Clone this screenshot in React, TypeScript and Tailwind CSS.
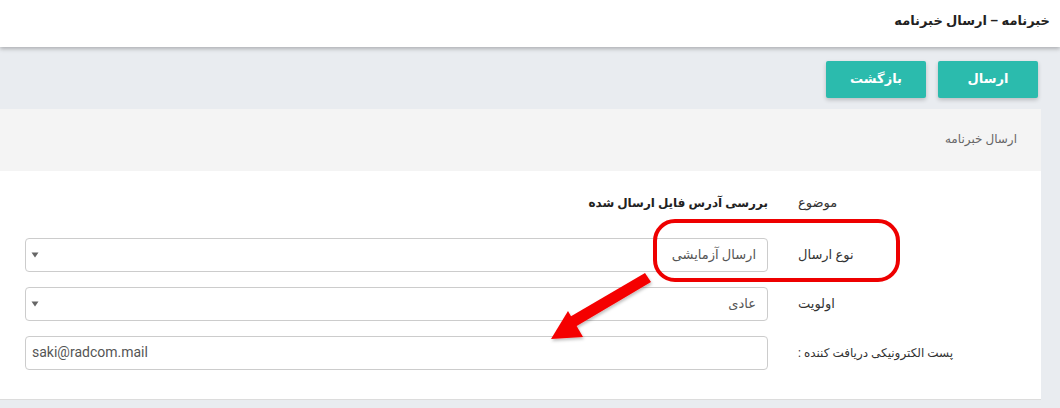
import React from "react";

const fa = { fontFamily: 'Roboto, "DejaVu Sans", sans-serif' };

function Caret() {
  return (
    <svg width="8" height="6" viewBox="0 0 8 6" className="shrink-0">
      <path d="M0.5 0.5 L7.5 0.5 L4 5.5 Z" fill="#666" />
    </svg>
  );
}

export default function App() {
  return (
    <div dir="rtl" style={fa} className="relative w-[1060px] h-[408px] overflow-hidden bg-[#e9ecf0] text-[#333]">
      {/* header */}
      <div className="relative z-10 h-[47px] bg-white shadow-[0_2px_4px_rgba(0,0,0,0.25)] flex items-center pr-[10px] pb-[6px]">
        <div className="text-[13px] font-bold text-[#222]">خبرنامه – ارسال خبرنامه</div>
      </div>

      {/* buttons */}
      <div className="flex gap-[12px] pr-[22px] pt-[14px]">
        <button className="w-[100px] h-[37px] rounded-[2px] bg-[#2bbbad] text-white text-[13px] font-bold shadow-[0_2px_4px_rgba(0,0,0,0.2)] pb-[2px]">
          ارسال
        </button>
        <button className="w-[100px] h-[37px] rounded-[2px] bg-[#2bbbad] text-white text-[13px] font-bold shadow-[0_2px_4px_rgba(0,0,0,0.2)] pb-[2px]">
          بازگشت
        </button>
      </div>

      {/* card */}
      <div className="mt-[11px] mr-[19px] w-[1041px] border-b border-[#dcdcdc]">
        <div className="h-[62px] bg-[#f4f4f4] flex items-center pr-[24px] pb-[2px]">
          <div className="text-[12px] text-[#666]">ارسال خبرنامه</div>
        </div>
        <div className="bg-white pt-[10px] pb-[22px]">
          {/* row 1 */}
          <div className="flex items-center gap-[30px] h-[49px] pb-[5px]">
            <div className="w-[243px] shrink-0 text-left text-[13px] text-[#333]">موضوع</div>
            <div className="w-[743px] text-[12px] font-bold text-[#222]">بررسی آدرس فایل ارسال شده</div>
          </div>
          {/* row 2 */}
          <div className="flex items-center gap-[30px] h-[49px]">
            <div className="w-[243px] shrink-0 text-left text-[13px] text-[#333]">نوع ارسال</div>
            <div className="w-[743px] h-[34px] border border-[#ccc] rounded-[4px] flex items-center justify-between pr-[11px] pl-[5px]">
              <span className="text-[13px] text-[#555]">ارسال آزمایشی</span>
              <Caret />
            </div>
          </div>
          {/* row 3 */}
          <div className="flex items-center gap-[30px] h-[49px]">
            <div className="w-[243px] shrink-0 text-left text-[13px] text-[#333]">اولویت</div>
            <div className="w-[743px] h-[34px] border border-[#ccc] rounded-[4px] flex items-center justify-between pr-[11px] pl-[5px]">
              <span className="text-[13px] text-[#555]">عادی</span>
              <Caret />
            </div>
          </div>
          {/* row 4 */}
          <div className="flex items-center gap-[30px] h-[49px]">
            <div className="w-[243px] shrink-0 text-left text-[12px] text-[#333]">پست الکترونیکی دریافت کننده :</div>
            <div dir="ltr" className="w-[743px] h-[34px] border border-[#ccc] rounded-[4px] flex items-center pl-[6px]">
              <span className="text-[14px] text-[#555]">saki@radcom.mail</span>
            </div>
          </div>
        </div>
      </div>

      {/* annotation */}
      <svg className="absolute left-0 top-0 pointer-events-none" width="1060" height="408" viewBox="0 0 1060 408">
        <defs>
          <filter id="sh" x="-20%" y="-20%" width="140%" height="140%">
            <feDropShadow dx="1" dy="2" stdDeviation="1.5" floodColor="#000" floodOpacity="0.25" />
          </filter>
        </defs>
        <rect x="655" y="221" width="243" height="59" rx="20" ry="20" fill="none" stroke="#ee0000" strokeWidth="4" />
        <g filter="url(#sh)" fill="#f50000">
          <path d="M645 273 L651 282 L575 327 L568 318 Z" />
          <path d="M551 339 L568 311 L583 337 Z" />
        </g>
      </svg>
    </div>
  );
}
